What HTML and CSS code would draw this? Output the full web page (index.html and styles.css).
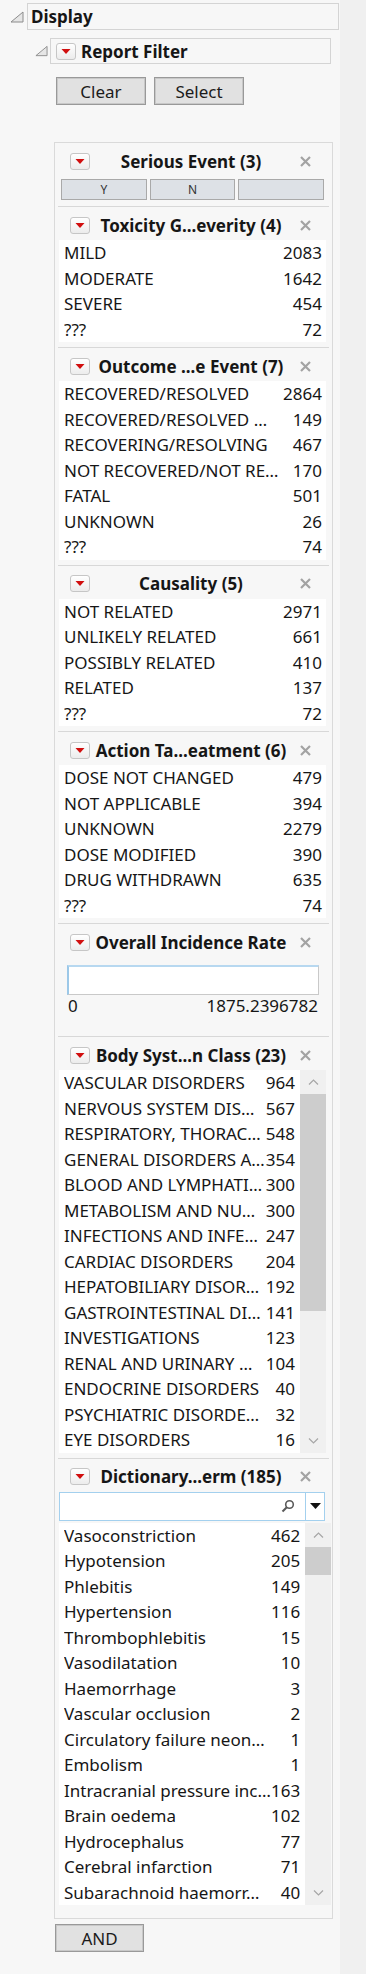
FILE: index.html
```html
<!DOCTYPE html>
<html lang="en">
<head>
  <meta charset="UTF-8">
  <title>Report Filter</title>
  <link rel="stylesheet" href="styles.css">
</head>
<body>
<div class="page">

  <div class="outline display-row">
    <svg class="disclose" width="14" height="12" viewBox="0 0 14 12"><polygon points="1,11 13,11 13,1" fill="#e6e6e6" stroke="#8c8c8c" stroke-width="1"/></svg>
    <div class="outline-box">Display</div>
  </div>

  <div class="outline filter-row">
    <svg class="disclose" width="13" height="12" viewBox="0 0 14 12"><polygon points="1,11 13,11 13,1" fill="#e6e6e6" stroke="#8c8c8c" stroke-width="1"/></svg>
    <div class="outline-box">
      <span class="menu-btn"><svg width="20" height="17" viewBox="0 0 20 17"><polygon points="5.5,6 14.5,6 10,11" fill="#d10f0f"/></svg></span>
      Report Filter
    </div>
  </div>

  <div class="actions">
    <button class="btn">Clear</button>
    <button class="btn">Select</button>
  </div>

  <div class="panel">

    <!-- Serious Event -->
    <section class="fsec first">
      <div class="fhead">
        <span class="menu-btn"><svg width="20" height="17" viewBox="0 0 20 17"><polygon points="5.5,6 14.5,6 10,11" fill="#d10f0f"/></svg></span>
        <span class="ftitle">Serious Event (3)</span>
        <span class="close"><svg width="13" height="13" viewBox="0 0 13 13"><path d="M2 2 L11 11 M11 2 L2 11" stroke="#a3a3a3" stroke-width="2.2"/></svg></span>
      </div>
      <div class="yn">
        <span class="ynbtn">Y</span>
        <span class="ynbtn">N</span>
        <span class="ynbtn"></span>
      </div>
    </section>

    <!-- Toxicity -->
    <section class="fsec">
      <div class="fhead">
        <span class="menu-btn"><svg width="20" height="17" viewBox="0 0 20 17"><polygon points="5.5,6 14.5,6 10,11" fill="#d10f0f"/></svg></span>
        <span class="ftitle">Toxicity G...everity (4)</span>
        <span class="close"><svg width="13" height="13" viewBox="0 0 13 13"><path d="M2 2 L11 11 M11 2 L2 11" stroke="#a3a3a3" stroke-width="2.2"/></svg></span>
      </div>
      <ul class="list">
        <li><span class="lbl">MILD</span><span class="num">2083</span></li>
        <li><span class="lbl">MODERATE</span><span class="num">1642</span></li>
        <li><span class="lbl">SEVERE</span><span class="num">454</span></li>
        <li><span class="lbl">???</span><span class="num">72</span></li>
      </ul>
    </section>

    <!-- Outcome -->
    <section class="fsec">
      <div class="fhead">
        <span class="menu-btn"><svg width="20" height="17" viewBox="0 0 20 17"><polygon points="5.5,6 14.5,6 10,11" fill="#d10f0f"/></svg></span>
        <span class="ftitle">Outcome ...e Event (7)</span>
        <span class="close"><svg width="13" height="13" viewBox="0 0 13 13"><path d="M2 2 L11 11 M11 2 L2 11" stroke="#a3a3a3" stroke-width="2.2"/></svg></span>
      </div>
      <ul class="list">
        <li><span class="lbl">RECOVERED/RESOLVED</span><span class="num">2864</span></li>
        <li><span class="lbl">RECOVERED/RESOLVED …</span><span class="num">149</span></li>
        <li><span class="lbl">RECOVERING/RESOLVING</span><span class="num">467</span></li>
        <li><span class="lbl">NOT RECOVERED/NOT RE…</span><span class="num">170</span></li>
        <li><span class="lbl">FATAL</span><span class="num">501</span></li>
        <li><span class="lbl">UNKNOWN</span><span class="num">26</span></li>
        <li><span class="lbl">???</span><span class="num">74</span></li>
      </ul>
    </section>

    <!-- Causality -->
    <section class="fsec">
      <div class="fhead">
        <span class="menu-btn"><svg width="20" height="17" viewBox="0 0 20 17"><polygon points="5.5,6 14.5,6 10,11" fill="#d10f0f"/></svg></span>
        <span class="ftitle">Causality (5)</span>
        <span class="close"><svg width="13" height="13" viewBox="0 0 13 13"><path d="M2 2 L11 11 M11 2 L2 11" stroke="#a3a3a3" stroke-width="2.2"/></svg></span>
      </div>
      <ul class="list">
        <li><span class="lbl">NOT RELATED</span><span class="num">2971</span></li>
        <li><span class="lbl">UNLIKELY RELATED</span><span class="num">661</span></li>
        <li><span class="lbl">POSSIBLY RELATED</span><span class="num">410</span></li>
        <li><span class="lbl">RELATED</span><span class="num">137</span></li>
        <li><span class="lbl">???</span><span class="num">72</span></li>
      </ul>
    </section>

    <!-- Action Taken -->
    <section class="fsec">
      <div class="fhead">
        <span class="menu-btn"><svg width="20" height="17" viewBox="0 0 20 17"><polygon points="5.5,6 14.5,6 10,11" fill="#d10f0f"/></svg></span>
        <span class="ftitle">Action Ta...eatment (6)</span>
        <span class="close"><svg width="13" height="13" viewBox="0 0 13 13"><path d="M2 2 L11 11 M11 2 L2 11" stroke="#a3a3a3" stroke-width="2.2"/></svg></span>
      </div>
      <ul class="list">
        <li><span class="lbl">DOSE NOT CHANGED</span><span class="num">479</span></li>
        <li><span class="lbl">NOT APPLICABLE</span><span class="num">394</span></li>
        <li><span class="lbl">UNKNOWN</span><span class="num">2279</span></li>
        <li><span class="lbl">DOSE MODIFIED</span><span class="num">390</span></li>
        <li><span class="lbl">DRUG WITHDRAWN</span><span class="num">635</span></li>
        <li><span class="lbl">???</span><span class="num">74</span></li>
      </ul>
    </section>

    <!-- Overall Incidence Rate -->
    <section class="fsec">
      <div class="fhead">
        <span class="menu-btn"><svg width="20" height="17" viewBox="0 0 20 17"><polygon points="5.5,6 14.5,6 10,11" fill="#d10f0f"/></svg></span>
        <span class="ftitle">Overall Incidence Rate</span>
        <span class="close"><svg width="13" height="13" viewBox="0 0 13 13"><path d="M2 2 L11 11 M11 2 L2 11" stroke="#a3a3a3" stroke-width="2.2"/></svg></span>
      </div>
      <div class="range">
        <div class="range-box"></div>
        <div class="range-lbls"><span>0</span><span>1875.2396782</span></div>
      </div>
    </section>

    <!-- Body System -->
    <section class="fsec">
      <div class="fhead">
        <span class="menu-btn"><svg width="20" height="17" viewBox="0 0 20 17"><polygon points="5.5,6 14.5,6 10,11" fill="#d10f0f"/></svg></span>
        <span class="ftitle">Body Syst...n Class (23)</span>
        <span class="close"><svg width="13" height="13" viewBox="0 0 13 13"><path d="M2 2 L11 11 M11 2 L2 11" stroke="#a3a3a3" stroke-width="2.2"/></svg></span>
      </div>
      <div class="scroll-list">
        <ul class="list">
          <li><span class="lbl">VASCULAR DISORDERS</span><span class="num">964</span></li>
          <li><span class="lbl">NERVOUS SYSTEM DIS…</span><span class="num">567</span></li>
          <li><span class="lbl">RESPIRATORY, THORAC…</span><span class="num">548</span></li>
          <li><span class="lbl">GENERAL DISORDERS A…</span><span class="num">354</span></li>
          <li><span class="lbl">BLOOD AND LYMPHATI…</span><span class="num">300</span></li>
          <li><span class="lbl">METABOLISM AND NU…</span><span class="num">300</span></li>
          <li><span class="lbl">INFECTIONS AND INFE…</span><span class="num">247</span></li>
          <li><span class="lbl">CARDIAC DISORDERS</span><span class="num">204</span></li>
          <li><span class="lbl">HEPATOBILIARY DISOR…</span><span class="num">192</span></li>
          <li><span class="lbl">GASTROINTESTINAL DI…</span><span class="num">141</span></li>
          <li><span class="lbl">INVESTIGATIONS</span><span class="num">123</span></li>
          <li><span class="lbl">RENAL AND URINARY …</span><span class="num">104</span></li>
          <li><span class="lbl">ENDOCRINE DISORDERS</span><span class="num">40</span></li>
          <li><span class="lbl">PSYCHIATRIC DISORDE…</span><span class="num">32</span></li>
          <li><span class="lbl">EYE DISORDERS</span><span class="num">16</span></li>
        </ul>
        <div class="sbar">
          <span class="sb-btn"><svg width="11" height="6" viewBox="0 0 11 6"><path d="M1 5.5 L5.5 1 L10 5.5" fill="none" stroke="#a6a6a6" stroke-width="1.2"/></svg></span>
          <span class="sb-thumb body-thumb"></span>
          <span class="sb-track"></span>
          <span class="sb-btn"><svg width="11" height="6" viewBox="0 0 11 6"><path d="M1 0.5 L5.5 5 L10 0.5" fill="none" stroke="#a6a6a6" stroke-width="1.2"/></svg></span>
        </div>
      </div>
    </section>

    <!-- Dictionary term -->
    <section class="fsec last">
      <div class="fhead">
        <span class="menu-btn"><svg width="20" height="17" viewBox="0 0 20 17"><polygon points="5.5,6 14.5,6 10,11" fill="#d10f0f"/></svg></span>
        <span class="ftitle">Dictionary...erm (185)</span>
        <span class="close"><svg width="13" height="13" viewBox="0 0 13 13"><path d="M2 2 L11 11 M11 2 L2 11" stroke="#a3a3a3" stroke-width="2.2"/></svg></span>
      </div>
      <div class="search">
        <span class="search-field">
          <svg width="14" height="14" viewBox="0 0 14 14"><circle cx="8.5" cy="5.5" r="3.8" fill="none" stroke="#5a5a5a" stroke-width="1.6"/><path d="M5.8 8.2 L1.5 12.5" stroke="#5a5a5a" stroke-width="2"/></svg>
        </span>
        <span class="search-drop"><svg width="11" height="6" viewBox="0 0 11 6"><polygon points="0,0 11,0 5.5,6" fill="#111"/></svg></span>
      </div>
      <div class="scroll-list">
        <ul class="list">
          <li><span class="lbl">Vasoconstriction</span><span class="num">462</span></li>
          <li><span class="lbl">Hypotension</span><span class="num">205</span></li>
          <li><span class="lbl">Phlebitis</span><span class="num">149</span></li>
          <li><span class="lbl">Hypertension</span><span class="num">116</span></li>
          <li><span class="lbl">Thrombophlebitis</span><span class="num">15</span></li>
          <li><span class="lbl">Vasodilatation</span><span class="num">10</span></li>
          <li><span class="lbl">Haemorrhage</span><span class="num">3</span></li>
          <li><span class="lbl">Vascular occlusion</span><span class="num">2</span></li>
          <li><span class="lbl">Circulatory failure neon…</span><span class="num">1</span></li>
          <li><span class="lbl">Embolism</span><span class="num">1</span></li>
          <li><span class="lbl">Intracranial pressure inc…</span><span class="num">163</span></li>
          <li><span class="lbl">Brain oedema</span><span class="num">102</span></li>
          <li><span class="lbl">Hydrocephalus</span><span class="num">77</span></li>
          <li><span class="lbl">Cerebral infarction</span><span class="num">71</span></li>
          <li><span class="lbl">Subarachnoid haemorr…</span><span class="num">40</span></li>
        </ul>
        <div class="sbar">
          <span class="sb-btn"><svg width="11" height="6" viewBox="0 0 11 6"><path d="M1 5.5 L5.5 1 L10 5.5" fill="none" stroke="#a6a6a6" stroke-width="1.2"/></svg></span>
          <span class="sb-thumb dict-thumb"></span>
          <span class="sb-track"></span>
          <span class="sb-btn"><svg width="11" height="6" viewBox="0 0 11 6"><path d="M1 0.5 L5.5 5 L10 0.5" fill="none" stroke="#a6a6a6" stroke-width="1.2"/></svg></span>
        </div>
      </div>
    </section>

  </div>

  <button class="btn and-btn">AND</button>

</div>
</body>
</html>
```

FILE: styles.css
```css
body {
  margin: 0;
  padding: 0;
  background: #f0f0f0;
  color: #161616;
  font-family: "Noto Sans", "Open Sans", sans-serif;
  font-size: 17px;
}

.page {
  width: 340px;
  min-height: 1974px;
  background: #f7f7f7;
  padding-top: 3px;
  box-sizing: border-box;
}

/* outline nodes */
.outline {
  display: flex;
  align-items: center;
}

.outline-box {
  flex: 1;
  display: flex;
  align-items: center;
  gap: 5px;
  border: 1px solid #d4d4d4;
  font-weight: bold;
  box-sizing: border-box;
}

.display-row {
  padding-left: 10px;
  gap: 3px;
  margin-right: 1px;
}

.display-row .outline-box {
  height: 27px;
  padding-left: 3px;
}

.filter-row {
  margin-top: 8px;
  padding-left: 35px;
  gap: 2px;
  margin-right: 9px;
}

.filter-row .outline-box {
  height: 26px;
  padding-left: 5px;
}

.menu-btn {
  display: inline-flex;
  width: 20px;
  height: 17px;
  flex: none;
  border: 1px solid #c6c6c6;
  border-radius: 3px;
  background: linear-gradient(#ffffff, #ececec);
  box-sizing: border-box;
  align-items: center;
  justify-content: center;
  overflow: hidden;
}

.menu-btn svg {
  margin: -1px;
}

/* buttons */
.actions {
  display: flex;
  gap: 8px;
  margin: 13px 0 0 56px;
}

.btn {
  width: 90px;
  height: 28px;
  background: #e1e1e1;
  border: 1px solid #999;
  box-shadow: inset 0 0 0 1px #c8c8c8;
  font-family: inherit;
  font-size: 17px;
  color: #1b1b1b;
  padding: 0;
}

.and-btn {
  display: block;
  margin: 5px 0 0 55px;
  width: 89px;
}

/* filter panel */
.panel {
  margin: 37px 0 0 54px;
  width: 279px;
  border: 1px solid #dadada;
  padding: 0 3px;
  box-sizing: border-box;
}

.fsec {
  border-top: 1px solid #d8d8d8;
  padding-bottom: 5px;
}

.fsec.first {
  border-top: none;
  padding-bottom: 6px;
}

.fsec.last {
  padding-bottom: 13px;
}

.fhead {
  height: 33px;
  padding: 3px 11px 0 12px;
  display: flex;
  align-items: center;
  box-sizing: border-box;
}

.ftitle {
  flex: 1;
  text-align: center;
  font-weight: bold;
  white-space: nowrap;
  overflow: hidden;
  font-size: 17px;
}

.close {
  width: 26px;
  display: flex;
  justify-content: center;
  flex: none;
}

.yn {
  display: grid;
  grid-template-columns: repeat(3, 1fr);
  gap: 3px;
  padding: 0 5px 0 3px;
  margin-top: 3px;
}

.ynbtn {
  height: 21px;
  background: #dde1e6;
  border: 1px solid #a9a9a9;
  box-sizing: border-box;
  font-size: 12px;
  display: flex;
  align-items: center;
  justify-content: center;
  color: #333;
}

/* lists */
.list {
  list-style: none;
  margin: 0 3px 0 1px;
  padding: 0;
  background: #fff;
}

.list li {
  display: flex;
  height: 25.5px;
  line-height: 25.5px;
  padding: 0 4px 0 5px;
  white-space: nowrap;
}

.lbl {
  flex: 1;
  min-width: 0;
  overflow: hidden;
  text-overflow: ellipsis;
}

.num {
  flex: none;
  text-align: right;
}

.scroll-list {
  display: flex;
  margin: 0 3px 0 1px;
}

.scroll-list .list {
  flex: 1;
  margin: 0;
}

.scroll-list .list li {
  padding-right: 5px;
}

.sbar {
  width: 26px;
  flex: none;
  background: #f0f0f0;
  display: flex;
  flex-direction: column;
}

.sb-btn {
  height: 24px;
  display: flex;
  align-items: center;
  justify-content: center;
}

.sb-thumb {
  background: #cdcdcd;
}

.body-thumb {
  height: 217px;
}

.dict-thumb {
  height: 28px;
}

.sb-track {
  flex: 1;
}

/* range slider */
.range {
  padding: 8px 10px 15px 9px;
}

.range-box {
  height: 30px;
  background: #fff;
  border: 1px solid #c9c9c9;
  border-left: 2px solid #9cc8e8;
  border-top: 2px solid #b7d8f0;
  box-sizing: border-box;
}

.range-lbls {
  display: flex;
  justify-content: space-between;
  height: 21px;
  line-height: 21px;
  padding: 0 1px;
}

/* search */
.search {
  display: flex;
  height: 29px;
  margin: 0 4px 0 1px;
  border: 1px solid #a3d0ee;
  background: #fff;
  box-sizing: border-box;
}

.search-field {
  flex: 1;
  display: flex;
  align-items: center;
  justify-content: flex-end;
  padding-right: 10px;
}

.search-drop {
  width: 18px;
  border-left: 1px solid #a3d0ee;
  display: flex;
  align-items: center;
  justify-content: center;
}

.last .scroll-list {
  margin-top: 2px;
}
```
